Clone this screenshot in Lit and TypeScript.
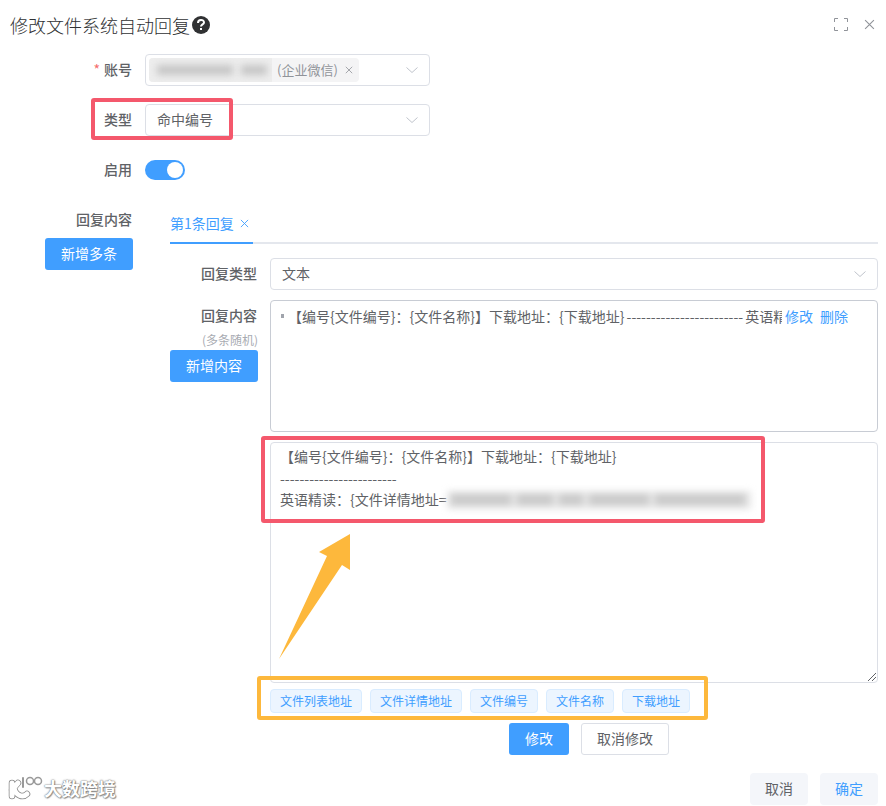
import { LitElement, html, css, svg } from "lit";
import { customElement } from "lit/decorators.js";

const chevron = html`<svg class="chev" width="14" height="14" viewBox="0 0 14 14"><path d="M1.5 4.5 7 9.5 12.5 4.5" fill="none" stroke="#c0c4cc" stroke-width="1"/></svg>`;
const cross = (c: string, s = 10) => html`<svg width=${s} height=${s} viewBox="0 0 10 10"><path d="M1 1 9 9M9 1 1 9" fill="none" stroke=${c} stroke-width="1"/></svg>`;

@customElement("app-root")
export class AppRoot extends LitElement {
  static styles = css`
    :host { display: block; width: 886px; height: 806px; position: relative; overflow: hidden; background: #fff;
      font-family: "Noto Sans CJK SC", "Liberation Sans", sans-serif; font-size: 14px; color: #606266; }
    * { box-sizing: border-box; }
    .dialog { display: flex; flex-direction: column; padding: 0 8px 0 0; height: 806px; }
    .header { height: 54px; flex: none; display: flex; align-items: center; padding: 0 0 5px 10px; }
    .title { font-size: 18px; line-height: 24px; color: #303133; font-weight: 300; }
    .help { margin-left: 1px; display: block; }
    .hdr-icons { margin-left: auto; display: flex; align-items: center; gap: 16px; padding-right: 3px; }
    .hdr-icons svg { display: block; }
    .row { display: flex; align-items: center; }
    .lbl { width: 133px; flex: none; padding-right: 1px; text-align: right; font-weight: 500; font-size: 14px; line-height: 20px; color: #606266; position: relative; top: -1px; }
    .star { color: #f56c6c; font-weight: 400; margin-right: 4px; }
    .ctl { margin-left: 12px; }
    .select { height: 32px; border: 1px solid #dcdfe6; border-radius: 4px; display: flex; align-items: center; position: relative; background: #fff; font-size: 14px; }
    .chev { position: absolute; right: 10px; top: 8px; }
    .w285 { width: 285px; }
    .txt { padding-left: 11px; color: #606266; line-height: 20px; position: relative; top: -1px; }
    .tag { margin-left: 3px; height: 24px; width: 210px; background: #f4f4f5; border-radius: 4px; display: flex; align-items: center; color: #909399; font-size: 13px; overflow: hidden; }
    .tag-blur { width: 123px; height: 24px; flex: none; display: flex; align-items: center; gap: 8px; padding-left: 8px; background: #ededed; overflow: hidden; }
    .tag-blur i { display: block; height: 10px; background: #c6c6c6; filter: blur(3.5px); }
    .tag-text { margin-left: 5px; white-space: nowrap; position: relative; top: -1px; }
    .tag svg { margin-left: 7px; }
    .mt18 { margin-top: 18px; }
    .mt24 { margin-top: 24px; }
    .switch { width: 40px; height: 20px; border-radius: 10px; background: #409eff; position: relative; }
    .switch::after { content: ""; position: absolute; right: 2px; top: 2px; width: 16px; height: 16px; background: #fff; border-radius: 50%; }
    .section { display: flex; margin-top: 30px; }
    .left { width: 133px; flex: none; display: flex; flex-direction: column; align-items: flex-end; }
    .left .lbl { width: auto; padding-right: 1px; }
    .btn { height: 32px; border-radius: 3px; display: flex; align-items: center; justify-content: center; font-size: 14px; line-height: 20px; padding-bottom: 2px; border: 1px solid transparent; white-space: nowrap; }
    .primary { background: #409eff; color: #fff; }
    .w88 { width: 88px; }
    .w60 { width: 60px; }
    .mt8 { margin-top: 8px; }
    .right { margin-left: 37px; flex: 1; min-width: 0; }
    .tabs { height: 34px; border-bottom: 2px solid #e4e7ed; display: flex; }
    .tab { width: 83px; height: 34px; border-bottom: 2px solid #409eff; color: #409eff; font-size: 14px; display: flex; align-items: center; padding-bottom: 6px; gap: 6px; white-space: nowrap; flex: none; }
    .tab svg { margin-top: 1px; flex: none; }
    .sub { display: flex; align-items: flex-start; }
    .sub-l { width: 88px; flex: none; display: flex; flex-direction: column; align-items: flex-end; }
    .sub-l .lbl { width: auto; padding-right: 1px; }
    .sub-r { margin-left: 12px; flex: 1; min-width: 0; position: relative; }
    .hint { font-size: 12px; line-height: 18px; color: #a8abb2; margin-top: 6px; position: relative; top: -1px; }
    .sel-w { width: 608px; }
    .list { height: 132px; border: 1px solid #c8ccd4; border-radius: 4px; display: flex; align-items: flex-start; padding: 5px 0 0 10px; font-size: 14px; line-height: 20px; }
    .dot { width: 3px; height: 4px; background: #a0a4ac; margin-top: 8px; flex: none; }
    .list-text { width: 494px; margin-left: 4px; overflow: hidden; white-space: nowrap; flex: none; color: #606266; word-spacing: -1px; }
    .link { color: #409eff; flex: none; }
    .l1 { margin-left: 3px; }
    .l2 { margin-left: 7px; }
    .area { height: 241px; margin-top: 10px; border: 1px solid #dcdfe6; border-radius: 4px; padding: 3px 9px; font-size: 14px; line-height: 21.5px; position: relative; color: #606266; }
    .area div { white-space: nowrap; display: flex; align-items: center; }
    .blur { width: 304px; height: 18px; background: #e6e6e6; display: flex; align-items: center; gap: 6px; padding: 0 4px; flex: none; filter: blur(3.5px); }
    .blur i { display: block; height: 11px; background: #cacaca; }
    .grip { position: absolute; right: 0; bottom: 0; display: block; }
    .tags { display: flex; gap: 8px; margin-top: 6px; padding-left: 100px; }
    .chip { height: 24px; padding: 0 9px; line-height: 21px; font-size: 12px; color: #409eff; background: #ecf5ff; border: 1px solid #d9ecff; border-radius: 4px; white-space: nowrap; }
    .ops { display: flex; gap: 12px; margin-top: 10px; padding-left: 339px; }
    .plain { background: #fff; border-color: #dcdfe6; color: #606266; }
    .footer { display: flex; justify-content: flex-end; gap: 12px; margin-top: 18px; }
    .foot { width: 58px; background: #f4f6fa; border-radius: 4px; }
    .ok { color: #409eff; }
    .ann { position: absolute; border-radius: 3px; pointer-events: none; }
    .red { border: 4px solid #f4586c; }
    .r1 { left: 91px; top: 98px; width: 142px; height: 42px; }
    .r2 { left: 261px; top: 436px; width: 504px; height: 87px; }
    .yel { border: 4px solid #fdb83c; left: 257px; top: 676px; width: 451px; height: 44px; }
    .arrow { position: absolute; left: 270px; top: 525px; display: block; }
    .wm { position: absolute; left: 8px; top: 774px; display: flex; align-items: center; gap: 1px; }
    .wm svg { display: block; }
    .wm span { font-size: 18px; line-height: 28px; color: #fff; font-weight: 700; text-shadow: 0 0 2px #777, 0 0 1px #777, 1px 1px 1px #999; }
  `;

  render() {
    return html`
      <div class="dialog">
        <div class="header">
          <span class="title">修改文件系统自动回复</span>
          <svg class="help" width="20" height="20" viewBox="0 0 20 20">
            <circle cx="10" cy="10" r="9" fill="#303133"/>
            <path d="M7 8c0-4 6-4 6-.6 0 2-3 2-3 4.100" fill="none" stroke="#fff" stroke-width="2"/>
            <rect x="9" y="13" width="2" height="2" fill="#fff"/>
          </svg>
          <div class="hdr-icons">
            <svg width="14" height="13" viewBox="0 0 14 13"><path d="M.5 4V.5H4M10 .5h3.500V4M13.500 9v3.500H10M4 12.500H.5V9" fill="none" stroke="#909399" stroke-width="1"/></svg>
            ${cross("#909399", 11)}
          </div>
        </div>

        <div class="row">
          <div class="lbl"><span class="star">*</span>账号</div>
          <div class="ctl select w285">
            <div class="tag">
              <div class="tag-blur"><i style="width:76px"></i><i style="width:26px"></i></div>
              <span class="tag-text">(企业微信)</span>${cross("#909399", 8)}
            </div>
            ${chevron}
          </div>
        </div>
        <div class="row mt18">
          <div class="lbl">类型</div>
          <div class="ctl select w285"><span class="txt">命中编号</span>${chevron}</div>
        </div>
        <div class="row mt24">
          <div class="lbl">启用</div>
          <div class="ctl switch"></div>
        </div>

        <div class="section">
          <div class="left">
            <div class="lbl">回复内容</div>
            <div class="btn primary w88 mt8">新增多条</div>
          </div>
          <div class="right">
            <div class="tabs"><div class="tab">第1条回复 ${cross("#409eff", 9)}</div></div>
            <div class="sub" style="margin-top:14px">
              <div class="sub-l"><div class="lbl" style="margin-top:6px">回复类型</div></div>
              <div class="sub-r"><div class="select sel-w"><span class="txt">文本</span>${chevron}</div></div>
            </div>
            <div class="sub" style="margin-top:10px">
              <div class="sub-l">
                <div class="lbl" style="margin-top:6px">回复内容</div>
                <div class="hint">(多条随机)</div>
                <div class="btn primary w88">新增内容</div>
              </div>
              <div class="sub-r">
                <div class="list">
                  <span class="dot"></span>
                  <span class="list-text">【编号{文件编号}：{文件名称}】下载地址：{下载地址} ------------------------ 英语精</span>
                  <span class="link l1">修改</span><span class="link l2">删除</span>
                </div>
                <div class="area">
                  <div>【编号{文件编号}：{文件名称}】下载地址：{下载地址}</div>
                  <div>------------------------</div>
                  <div>英语精读：{文件详情地址=<span class="blur"><i style="width:60px"></i><i style="width:36px"></i><i style="width:24px"></i><i style="width:60px"></i><i style="width:90px"></i></span></div>
                  <svg class="grip" width="10" height="10" viewBox="0 0 10 10"><path d="M1 9 9 1M5 9 9 5" stroke="#606266" stroke-width="1" fill="none"/></svg>
                </div>
              </div>
            </div>
            <div class="tags">
              ${["文件列表地址", "文件详情地址", "文件编号", "文件名称", "下载地址"].map((t) => html`<span class="chip">${t}</span>`)}
            </div>
            <div class="ops">
              <div class="btn primary w60">修改</div>
              <div class="btn plain w88">取消修改</div>
            </div>
          </div>
        </div>
        <div class="footer">
          <div class="btn foot">取消</div>
          <div class="btn foot ok">确定</div>
        </div>
      </div>

      <div class="ann red r1"></div>
      <div class="ann red r2"></div>
      <div class="ann yel"></div>
      <svg class="arrow" width="90" height="140" viewBox="270 525 90 140">
        <path d="M279 659 327 556 319 552 350 534 350 570 342 565Z" fill="#fdb83c"/>
      </svg>
      <div class="wm">
        <svg width="35" height="28" viewBox="0 0 35 28">
          ${svg`<g fill="none" stroke-linecap="round">
            <path d="M4 9v13M4 16 10 9M6 14c2 8 9 10 13 6" stroke="#888" stroke-width="6.500"/>
            <path d="M4 9v13M4 16 10 9M6 14c2 8 9 10 13 6" stroke="#fff" stroke-width="5"/>
            <path d="M15 4v9" stroke="#999" stroke-width="2"/>
            <circle cx="22" cy="7" r="3.500" stroke="#999" stroke-width="1.500"/>
            <circle cx="30" cy="7" r="3.500" stroke="#999" stroke-width="1.500"/>
          </g>`}
        </svg>
        <span>大数跨境</span>
      </div>
    `;
  }
}
